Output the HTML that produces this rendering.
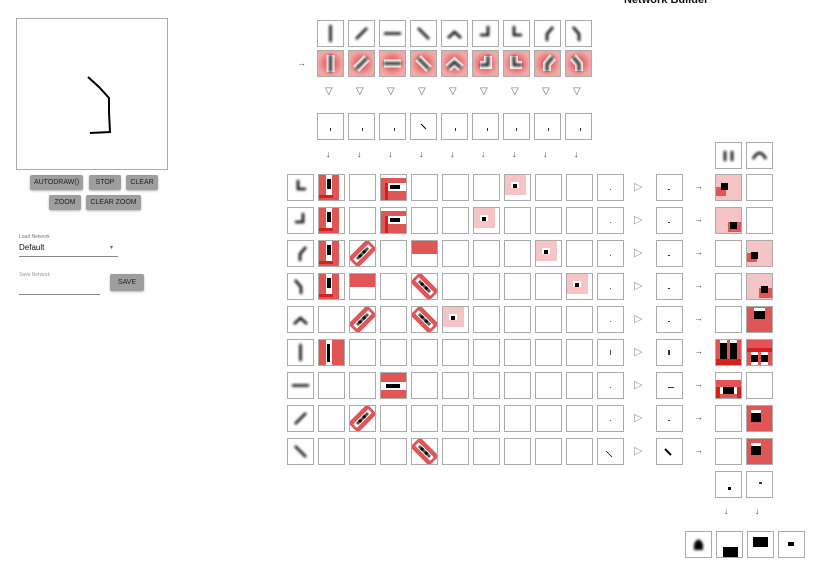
<!DOCTYPE html>
<html><head><meta charset="utf-8">
<style>
body{margin:0;width:822px;height:578px;background:#fff;position:relative;overflow:hidden;font-family:"Liberation Sans",sans-serif;}
.b{position:absolute;width:25px;height:25px;border:1px solid #ababab;background:#fff;overflow:hidden;}
.b svg{position:absolute;left:0;top:0;}
.r{position:absolute;}
.btn{position:absolute;background:#9e9e9e;color:#222;font-size:7px;text-align:center;border-radius:2px;box-shadow:0 1px 2px rgba(0,0,0,.3);}
.ar{position:absolute;font-size:9px;color:#444;}
</style></head><body>
<div style="position:absolute;left:16px;top:18px;width:150px;height:150px;border:1px solid #aaa;"></div>
<svg style="position:absolute;left:0;top:0" width="200" height="200"><path d="M88 77 L99 87 L109 98 L109 112 L110 132 L90 133" fill="none" stroke="#000" stroke-width="2"/></svg>
<div class="btn" style="left:30px;top:175px;width:53px;height:15px;line-height:15px">AUTODRAW()</div>
<div class="btn" style="left:89px;top:175px;width:32px;height:15px;line-height:15px">STOP</div>
<div class="btn" style="left:126px;top:175px;width:32px;height:15px;line-height:15px">CLEAR</div>
<div class="btn" style="left:49px;top:195px;width:32px;height:15px;line-height:15px">ZOOM</div>
<div class="btn" style="left:86px;top:195px;width:55px;height:15px;line-height:15px">CLEAR ZOOM</div>
<div style="position:absolute;left:19px;top:234px;font-size:5px;color:#777">Load Network</div>
<div style="position:absolute;left:19px;top:243px;font-size:8px;color:#111">Default</div>
<div style="position:absolute;left:110px;top:244px;font-size:6px;color:#666">▾</div>
<div style="position:absolute;left:19px;top:256px;width:99px;height:1px;background:#888"></div>
<div style="position:absolute;left:19px;top:272px;font-size:5px;color:#999">Save Network</div>
<div style="position:absolute;left:19px;top:294px;width:81px;height:1px;background:#888"></div>
<div class="btn" style="left:110px;top:274px;width:34px;height:17px;line-height:17px">SAVE</div>
<div style="position:absolute;left:624px;top:-6px;font-size:11px;font-weight:bold;color:#111">Network Builder</div>
<div class="ar" style="left:297px;top:58px">→</div>
<svg width="0" height="0" style="position:absolute"><defs><filter id="bl" filterUnits="userSpaceOnUse" x="-5" y="-5" width="35" height="35"><feGaussianBlur stdDeviation="1.3"/></filter></defs></svg>
<div id="c"></div>
<script>
var c=document.getElementById('c'),h='';
var P={v:'M12.5 4V21',d:'M7 18L18 7',h:'M4 12.5H21',a:'M7 7L18 18',c:'M6 17L12.5 11L19 17',J:'M15 5V14H7',L:'M10 5V14H18',f:'M18 6L12 13V20',g:'M7 6L13 13V20',u:'M9 8V18M16 8V18',n:'M6 16Q12.5 4 19 16'};
function box(x,y,inn){h+='<div class="b" style="left:'+x+'px;top:'+y+'px">'+(inn||'')+'</div>';}
function fil(k){return '<svg width="25" height="25"><path d="'+P[k]+'" stroke="#111" stroke-width="2.6" fill="none" filter="url(#bl)"/></svg>';}
function hal(k){return '<svg width="25" height="25"><defs><radialGradient id="g'+k+'"><stop offset="0" stop-color="#e04040"/><stop offset="1" stop-color="#f0a8a8"/></radialGradient></defs><rect width="25" height="25" fill="url(#g'+k+')"/><path d="'+P[k]+'" stroke="#f4f4f4" stroke-width="8" fill="none"/><path d="'+P[k]+'" stroke="#111" stroke-width="2.6" fill="none" filter="url(#bl)"/></svg>';}
function R(x,y,w,hh,col){return '<div class="r" style="left:'+x+'px;top:'+y+'px;width:'+w+'px;height:'+hh+'px;background:'+col+'"></div>';}
var red='#e05656',pk='#f5c5c5',dr='#d42020';
var rv=R(0,0,20,25,red)+R(7,0,6,20,'#fff')+R(8,4,4,10,'#000')+R(0,20,14,3,dr);
var rh=R(0,3,25,22,red)+R(4,8,21,8,'#fff')+R(9,10,10,4,'#000')+R(4,8,3,17,dr);
var rd='<svg width="25" height="25"><path d="M3 22L22 3" stroke="'+red+'" stroke-width="14"/><path d="M5 20L20 5" stroke="#fff" stroke-width="5"/><path d="M7 18L18 7" stroke="#555" stroke-width="3"/><path d="M9 16L16 9" stroke="#000" stroke-width="3" stroke-dasharray="3 3"/></svg>';
var ra='<svg width="25" height="25"><path d="M3 3L22 22" stroke="'+red+'" stroke-width="14"/><path d="M5 5L20 20" stroke="#fff" stroke-width="5"/><path d="M7 7L18 18" stroke="#555" stroke-width="3"/><path d="M9 9L16 16" stroke="#000" stroke-width="3" stroke-dasharray="3 3"/></svg>';
var rt=R(0,0,25,13,red);
var pkc=R(0,0,21,20,pk)+R(6,7,8,6,'#fff')+R(8,9,4,4,'#000');
var rvf=R(0,0,25,25,red)+R(7,0,6,25,'#fff')+R(8,4,3,18,'#000');
var rhf=R(0,0,25,25,red)+R(0,9,25,8,'#fff')+R(5,11,14,4,'#000');
var tops=['v','d','h','a','c','J','L','f','g'];
for(var i=0;i<9;i++){var x=317+31*i;box(x,20,fil(tops[i]));box(x,50,hal(tops[i]));
h+='<div class="ar" style="left:'+(x+8)+'px;top:86px;color:#666;font-size:10px">▽</div>';
box(x,113,i==3?'<svg width="25" height="25"><path d="M10 10L15 15" stroke="#000"/></svg>':R(12+(i%3),14,1,3,'#333'));
h+='<div class="ar" style="left:'+(x+9)+'px;top:149px">↓</div>';}
var lf=['L','J','f','g','c','v','h','d','a'];
var cells=[{0:rv,2:rh,6:pkc},{0:rv,2:rh,5:pkc},{0:rv,1:rd,3:rt,7:pkc},{0:rv,1:rt,3:ra,8:pkc},{1:rd,3:ra,4:pkc},{0:rvf},{2:rhf},{1:rd},{3:ra}];
var rc=[[R(0,0,25,25,pk)+R(0,12,10,9,red)+R(5,8,7,7,'#000'),''],[R(0,0,25,25,pk)+R(12,14,13,10,red)+R(14,14,7,7,'#000'),''],['',R(0,0,25,25,pk)+R(0,12,10,9,red)+R(4,11,7,7,'#000')],['',R(0,0,25,25,pk)+R(12,14,13,10,red)+R(14,12,7,7,'#000')],
['',R(0,0,25,25,red)+R(7,1,11,3,'#fff')+R(7,4,11,8,'#000')],
[R(0,0,25,25,red)+R(4,0,7,25,'#fff')+R(14,0,7,25,'#fff')+R(4,3,7,17,'#000')+R(14,3,7,17,'#000')+R(0,19,25,6,dr),R(0,0,25,25,red)+R(0,8,25,4,dr)+R(4,12,7,13,'#fff')+R(14,12,7,13,'#fff')+R(4,15,7,7,'#000')+R(14,15,7,7,'#000')],
[R(0,7,25,18,red)+R(0,14,4,11,dr)+R(21,14,4,11,dr)+R(4,14,17,7,'#fff')+R(7,14,11,7,'#000'),''],
['',R(0,0,25,25,red)+R(4,4,10,3,'#fff')+R(4,7,10,9,'#000')],
['',R(0,0,25,25,red)+R(4,4,10,3,'#fff')+R(4,7,10,9,'#000')]];
for(var r=0;r<9;r++){var y=174+33*r;box(287,y,fil(lf[r]));
for(var k=0;k<9;k++)box(318+31*k,y,cells[r][k]||'');
box(597,y,r==8?'<svg width="25" height="25"><path d="M8 12L14 18" stroke="#000" stroke-width=".7"/></svg>':R(12,r==5?10:14,1,r==5?5:1,'#555'));
h+='<div class="ar" style="left:634px;top:'+(y+6)+'px;color:#999;font-size:11px">▷</div>';
box(656,y,r==8?'<svg width="25" height="25"><path d="M8 10L14 16" stroke="#000" stroke-width="2"/></svg>':R(11,r==5?10:14,r==6?6:2,r==5?5:1,'#333'));
h+='<div class="ar" style="left:694px;top:'+(y+7)+'px">→</div>';
box(715,y,rc[r][0]);box(746,y,rc[r][1]);}
box(715,142,fil('u'));box(746,142,fil('n'));
box(715,471,R(12,15,3,3,'#000'));box(746,471,R(12,10,3,2,'#333'));
h+='<div class="ar" style="left:724px;top:506px">↓</div><div class="ar" style="left:755px;top:506px">↓</div>';
box(685,531,'<svg width="25" height="25"><path d="M8 18V12Q12.5 3 17 12V18Z" fill="#000" filter="url(#bl)"/></svg>');
box(716,531,R(6,15,15,10,'#000'));box(747,531,R(5,5,15,10,'#000'));box(778,531,R(9,10,6,4,'#000'));
c.innerHTML=h;
</script>
</body></html>
